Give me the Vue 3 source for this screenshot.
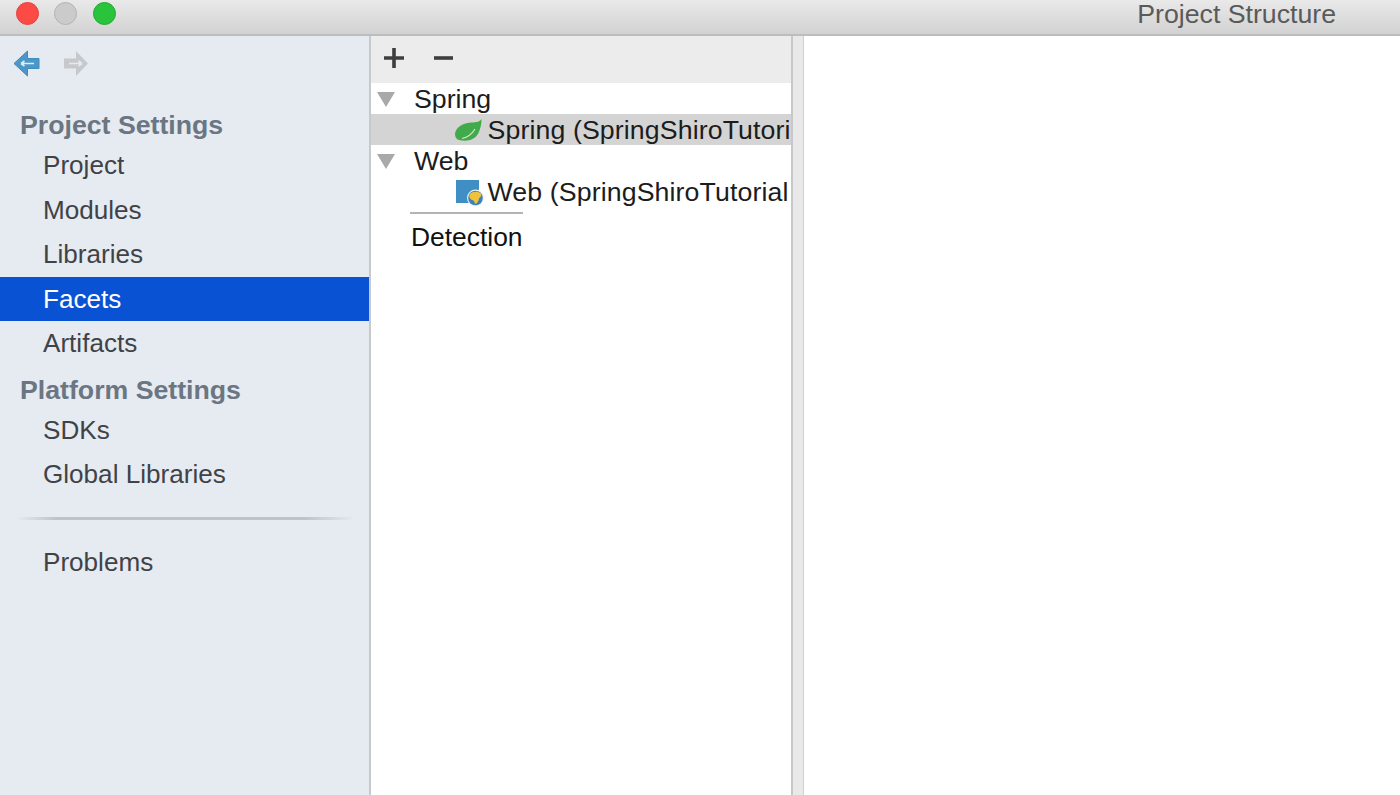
<script setup>
const groups = [
  { title: 'Project Settings', items: ['Project', 'Modules', 'Libraries', 'Facets', 'Artifacts'] },
  { title: 'Platform Settings', items: ['SDKs', 'Global Libraries'] },
]
</script>

<template>
  <div class="window">
    <header class="titlebar">
      <div class="lights">
        <span class="light red"></span>
        <span class="light grey"></span>
        <span class="light green"></span>
      </div>
      <span class="title">Project Structure</span>
    </header>
    <div class="body">
      <aside class="sidebar">
        <div class="nav-arrows">
          <svg width="28" height="28" viewBox="0 0 28 28">
            <path d="M14.500 1 L1 13.500 L14.500 26 V18.500 H26 V8.500 H14.500 Z" fill="#4a97c8" stroke="#3f8bbd" />
            <path d="M8 13.500 H21 M8 13.500 L11.500 11 M8 13.500 L11.500 16" stroke="#e6eaf0" stroke-width="1.600" fill="none" />
          </svg>
          <svg width="28" height="28" viewBox="0 0 28 28">
            <path d="M14 1 L26 13.500 L14 26 V18.500 H2 V8.500 H14 Z" fill="#c6c9cc" />
            <path d="M7 13.500 H20 M20 13.500 L16.500 11 M20 13.500 L16.500 16" stroke="#e6eaf0" stroke-width="1.600" fill="none" />
          </svg>
        </div>
        <section v-for="g in groups" :key="g.title" class="group">
          <h3 class="group-title">{{ g.title }}</h3>
          <div v-for="i in g.items" :key="i" class="item" :class="{ active: i === 'Facets' }">{{ i }}</div>
        </section>
        <div class="side-rule"></div>
        <div class="item">Problems</div>
      </aside>
      <main class="middle">
        <div class="toolbar">
          <svg width="22" height="22" viewBox="0 0 22 22">
            <path d="M11 1 V21 M1 11 H21" stroke="#3e3e3e" stroke-width="3.600" />
          </svg>
          <svg width="22" height="22" viewBox="0 0 22 22">
            <path d="M2 11 H21" stroke="#3e3e3e" stroke-width="3.600" />
          </svg>
        </div>
        <div class="tree">
          <div class="row head">
            <span class="tri"></span>
            <span>Spring</span>
          </div>
          <div class="row child selected">
            <svg class="ico" width="30" height="24" viewBox="0 0 30 24">
              <path d="M27.500 1 C26 3.500 23 4.500 17 4.500 C8 5 1.500 10 1 16 C1 19 2.500 21.500 5 22 C13 24 21 22 24.500 15 C26.500 10.500 27.500 6 27.500 1 Z" fill="#42aa4a" />
              <path d="M8 20.500 C13 19.500 18 16 21 11" stroke="#cbeccb" stroke-width="1.200" fill="none" />
            </svg>
            <span class="clip">Spring (SpringShiroTutori</span>
          </div>
          <div class="row head">
            <span class="tri"></span>
            <span>Web</span>
          </div>
          <div class="row child">
            <svg class="ico" width="30" height="31" viewBox="0 0 30 31">
              <rect x="2" y="4" width="23" height="23" fill="#3f8fc4" />
              <circle cx="21.500" cy="22" r="8.500" fill="#e8f0f6" />
              <circle cx="21.500" cy="22" r="7.300" fill="#3b82b8" />
              <path d="M15.500 19 C17 15.500 24 14.800 27 17.500 C28 20 26 21 25 22.500 C24.500 25.500 22.500 28.500 21 27.500 C20.500 25 19 24 17 23.500 C15.500 22.500 15 20.500 15.500 19 Z" fill="#f0c23c" />
            </svg>
            <span class="clip">Web (SpringShiroTutorial</span>
          </div>
          <div class="tree-rule"></div>
          <div class="detection">Detection</div>
        </div>
      </main>
      <div class="splitter"></div>
      <section class="detail"></section>
    </div>
  </div>
</template>

<style scoped>
.window {
  width: 1400px;
  height: 795px;
  overflow: hidden;
  display: flex;
  flex-direction: column;
  font-family: "Liberation Sans", Arial, sans-serif;
  background: #fff;
}
.titlebar {
  height: 34px;
  flex: none;
  display: flex;
  align-items: center;
  justify-content: space-between;
  padding: 0 64px 0 15.500px;
  background: linear-gradient(#e9e9e9, #d2d2d2);
  border-bottom: 2px solid #bdbdbd;
  box-sizing: content-box;
}
.lights {
  display: flex;
  gap: 15.500px;
  margin-top: -7px;
}
.light {
  width: 23px;
  height: 23px;
  border-radius: 50%;
  box-sizing: border-box;
}
.red { background: #fc4a47; border: 1px solid #e6413e; }
.grey { background: #cbcbcb; border: 1px solid #b3b3b3; }
.green { background: #2ac33c; border: 1px solid #22a832; }
.title {
  font-size: 26.700px;
  color: #5a5a5a;
  margin-top: -6px;
}
.body {
  flex: 1;
  display: flex;
  min-height: 0;
}
.sidebar {
  width: 369px;
  flex: none;
  background: #e6eaf1;
  border-right: 2px solid #c8c9cb;
  display: flex;
  flex-direction: column;
}
.nav-arrows {
  display: flex;
  gap: 21px;
  padding: 14px 0 0 13px;
  height: 60px;
  box-sizing: border-box;
  margin-bottom: 12px;
}
.group + .group { margin-top: 7px; }
.group-title {
  margin: 0;
  padding-left: 20px;
  font-size: 26.700px;
  line-height: 35px;
  font-weight: 700;
  color: #6b7683;
}
.item {
  height: 44.500px;
  line-height: 44.500px;
  padding-left: 43px;
  font-size: 26.100px;
  color: #3f4347;
}
.item.active {
  background: #0a52d4;
  color: #fff;
}
.side-rule {
  height: 3px;
  margin: 20px 14px 20px 16px;
  background: linear-gradient(90deg, #e6eaf1, #bfc3c8 12%, #bfc3c8 85%, #e6eaf1);
}
.middle {
  width: 420px;
  flex: none;
  background: #fff;
  display: flex;
  flex-direction: column;
}
.toolbar {
  height: 47px;
  flex: none;
  box-sizing: border-box;
  padding: 0 0 3px 12px;
  background: #ececec;
  display: flex;
  align-items: center;
  gap: 27px;
}
.tree {
  font-size: 26.700px;
  color: #1c1c1c;
  display: flex;
  flex-direction: column;
}
.row {
  height: 31px;
  box-sizing: border-box;
  display: flex;
  align-items: center;
  white-space: nowrap;
  overflow: hidden;
}
.head { padding: 2px 0 0 6px; gap: 19px; }
.tri {
  width: 0;
  height: 0;
  border-left: 9px solid transparent;
  border-right: 9px solid transparent;
  border-top: 15px solid #a9a9a9;
  flex: none;
}
.child { padding-left: 83px; gap: 3.500px; }
.child .clip { padding-top: 2px; letter-spacing: 0.120px; }
.selected { background: #d4d4d4; }
.ico { flex: none; }
.clip { white-space: nowrap; }
.tree-rule {
  height: 2px;
  width: 113px;
  margin: 5px 0 0 39px;
  background: #b4b4b4;
}
.detection {
  padding-left: 40px;
  line-height: 46px;
  font-size: 26.400px;
  color: #111;
}
.splitter {
  width: 13px;
  flex: none;
  background: #e9e9e9;
  border-left: 2px solid #c8c8c8;
  box-sizing: border-box;
  border-right: 1px solid #d0d0d0;
}
.detail {
  flex: 1;
  background: #fff;
}
</style>
